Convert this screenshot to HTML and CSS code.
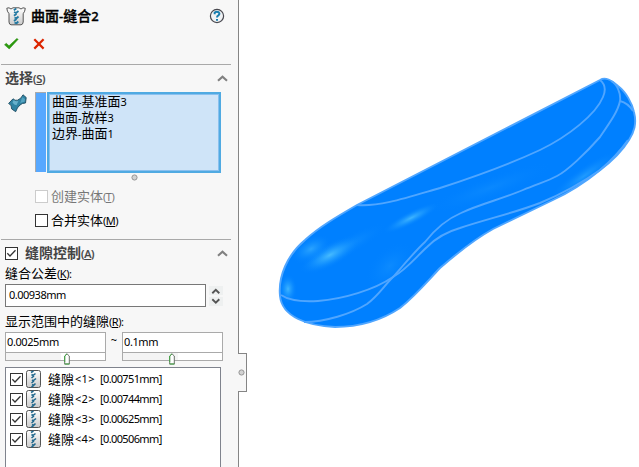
FILE: index.html
```html
<!DOCTYPE html>
<html lang="zh-CN">
<head>
<meta charset="utf-8">
<title>曲面-缝合2</title>
<link rel="stylesheet" href="styles.css">
</head>
<body>
<svg class="defs" width="0" height="0">
  <defs>
    <linearGradient id="metal" x1="0" y1="0" x2="0" y2="1"><stop offset="0" stop-color="#fff"/><stop offset="1" stop-color="#cbcbcb"/></linearGradient>
    <symbol id="up" viewBox="0 0 11 7"><path d="M1 5.7 5.5 1.6 10 5.7" fill="none" stroke="#808080" stroke-width="2.1"/></symbol>
    <symbol id="tick" viewBox="0 0 11 11"><path d="M1.3 5.3 4 8 9.5 2.3" fill="none" stroke="#333" stroke-width="1.3"/></symbol>
    <symbol id="knob" viewBox="0 0 7 7"><circle cx="3.5" cy="3.5" r="2.6" fill="#d2d2d2" stroke="#8d8d8d" stroke-width=".9"/></symbol>
    <symbol id="thumb" viewBox="0 0 6 12"><path d="M.7 11V3L3 .8 5.3 3V11Z" fill="#fff" stroke="#687268"/><path d="M.7 9V3L3 .8M.5 11h5" fill="none" stroke="#41a843"/></symbol>
    <symbol id="gap" viewBox="0 0 15 18">
      <rect x=".5" y=".5" width="14" height="17" rx="2" fill="url(#metal)" stroke="#555"/>
      <path d="M5 2.5 7.5 1M7 5.5 9.5 3.5M5.5 8 8 6M7.5 10.5 10 8.5M5.5 13 8 11M7.5 15.5 9.5 13.5M5.5 17 7.5 15.5M5.5 4.5 7 5.5M6 10 7.5 11M6 14.5 7.5 15.5" stroke="#23698e" stroke-width="1.6" fill="none"/>
    </symbol>
  </defs>
</svg>
<main class="app">
  <aside class="panel">
    <header class="title">
      <svg class="title-icon" viewBox="0 0 20 19"><path d="M.8 1.2 3 .8 5 2 7 .8h6L15 2 17 .8l2.3.5Q19 4.5 17.2 6.7V15Q16.9 17.7 15 17.8H5Q3.2 17.7 3 15V6.7Q1 4.5.8 1.2Z" fill="url(#metal)" stroke="#555"/><path d="m7.8 3.2 2.5-1.7M10 6l2.5-2M8 8.7l2.5-2M10.3 11.5l2.2-2M8 14l2.5-2M10.3 16.5l2-2M8 5l2.3 1M8.5 10.5l2 1M8.5 15.5l2 1" stroke="#2379a2" stroke-width="1.8"/></svg>
      <h1>曲面<i>-</i>缝合<i>2</i></h1>
      <svg class="help" viewBox="0 0 16 16"><circle cx="8" cy="8" r="6.6" fill="#f1f3f5" stroke="#48484f" stroke-width="1.2"/><path d="M5.7 6.2V4.5Q8 3 9.8 4.4 11.2 6 9.4 7.4 8 8.2 8 9.4M8 11v1.8" fill="none" stroke="#187eaf" stroke-width="2"/></svg>
    </header>
    <div class="actions">
      <svg class="ok" viewBox="0 0 15 12"><path d="M.5 6.8 2.3 5.3 5 7.8 12.8.5 14.2 1.3 5.2 11Z" fill="#2c9b0d" stroke="#278a10" stroke-width=".5"/></svg>
      <svg class="cancel" viewBox="0 0 12 12"><path d="m1.3 1.3 9.3 9.3M10.6 1.3 1.3 10.6" stroke="#dc2500" stroke-width="2.2"/></svg>
    </div>
    <section class="selection">
      <div class="head"><h2>选择<small>(<u>S</u>)</small></h2><svg class="chev"><use href="#up"/></svg></div>
      <div class="pick">
        <svg class="surf" viewBox="0 0 19 19"><path d="M.6 9.5 5 4.8Q7 7 9.5 6.2 13 5 15 .8L18.2 3.5 17.5 9Q14 9 12 11 9 13.5 7.7 17.7L3.7 15Q4 10.5.6 9.5Z" fill="#2f83a3" stroke="#1d4c62" stroke-width=".9"/><path d="M5.7 6Q8 8 10.5 6.7L8.5 11.2Q6 11 4.5 8.5Z" fill="#67b1cc"/><path d="M14.2 3.3 17 5 16.5 7.8Q14 8 12.2 9.2Z" fill="#55a4c1"/></svg>
        <div class="strip"></div>
        <ul class="faces"><li>曲面<i>-</i>基准面<i>3</i></li><li>曲面<i>-</i>放样<i>3</i></li><li>边界<i>-</i>曲面<i>1</i></li></ul>
      </div>
      <svg class="grip"><use href="#knob"/></svg>
      <label class="option off"><span class="box"></span><span class="name">创建实体<small>(<u>T</u>)</small></span></label>
      <label class="option"><span class="box"></span><span class="name">合并实体<small>(<u>M</u>)</small></span></label>
    </section>
    <section class="control">
      <div class="head"><span class="box"><svg><use href="#tick"/></svg></span><h2>缝隙控制<small>(<u>A</u>)</small></h2><svg class="chev"><use href="#up"/></svg></div>
      <div class="caption">缝合公差<small>(<u>K</u>):</small></div>
      <div class="tolerance"><div class="field">0.00938mm</div><svg class="spin" viewBox="0 0 14 20"><path d="M0 0h14v9H0zM0 11h14v9H0z" fill="#eef0f0"/><path d="M3.3 7.2 6.8 3.8l3.5 3.4M3.3 13.2l3.5 3.4 3.5-3.4" fill="none" stroke="#555" stroke-width="1.9"/></svg></div>
      <div class="caption second">显示范围中的缝隙<small>(<u>R</u>):</small></div>
      <div class="ranges">
        <div class="range"><div class="value">0.0025mm</div><div class="track"><svg class="low"><use href="#thumb"/></svg></div></div>
        <span class="tilde">~</span>
        <div class="range"><div class="value">0.1mm</div><div class="track"><svg class="high"><use href="#thumb"/></svg></div></div>
      </div>
      <ul class="gaps">
        <li><span class="box"><svg><use href="#tick"/></svg></span><svg class="gap"><use href="#gap"/></svg><b>缝隙</b><span class="num">&lt;1&gt;</span><span class="size">[0.00751mm]</span></li>
        <li><span class="box"><svg><use href="#tick"/></svg></span><svg class="gap"><use href="#gap"/></svg><b>缝隙</b><span class="num">&lt;2&gt;</span><span class="size">[0.00744mm]</span></li>
        <li><span class="box"><svg><use href="#tick"/></svg></span><svg class="gap"><use href="#gap"/></svg><b>缝隙</b><span class="num">&lt;3&gt;</span><span class="size">[0.00625mm]</span></li>
        <li><span class="box"><svg><use href="#tick"/></svg></span><svg class="gap"><use href="#gap"/></svg><b>缝隙</b><span class="num">&lt;4&gt;</span><span class="size">[0.00506mm]</span></li>
      </ul>
    </section>
    <div class="tab"><svg><use href="#knob"/></svg></div>
  </aside>
  <svg class="model" viewBox="239 0 400 467">
    <defs>
      <radialGradient id="shine"><stop offset="0" stop-color="#46bbff"/><stop offset=".45" stop-color="#239fff" stop-opacity=".65"/><stop offset="1" stop-color="#0080ff" stop-opacity="0"/></radialGradient>
      <clipPath id="body"><path id="outline" d="M280 296C278 277 287 255 305 240C319 227 338 216 357 205L600 80C605 77 612 80 618 86C626 92 632 103 634 112C637 124 634 132 629 140C623 150 611 162 599 171C583 184 568 193 553 200L493 229C475 239 462 249 440 268C425 284 415 296 400 308C382 320 360 327 335 327C308 326 282 317 280 296Z"/></clipPath>
    </defs>
    <use href="#outline" fill="#0080ff"/>
    <g clip-path="url(#body)">
      <ellipse cx="345" cy="247" rx="48" ry="10" transform="rotate(-28 345 247)" fill="url(#shine)" opacity=".25"/>
      <ellipse cx="330" cy="255" rx="34" ry="12" transform="rotate(-28 330 255)" fill="url(#shine)"/>
      <ellipse cx="311" cy="249" rx="22" ry="12" transform="rotate(-28 311 249)" fill="url(#shine)" opacity=".6"/>
      <ellipse cx="411" cy="218" rx="32" ry="7" transform="rotate(-27 411 218)" fill="url(#shine)" opacity=".9"/>
      <ellipse cx="288" cy="289" rx="9" ry="15" fill="url(#shine)" opacity=".9"/>
      <ellipse cx="490" cy="188" rx="68" ry="12" transform="rotate(-20 490 188)" fill="url(#shine)" opacity=".14"/>
      <ellipse cx="584" cy="176" rx="43" ry="9" transform="rotate(-35 584 176)" fill="url(#shine)" opacity=".45"/>
      <ellipse cx="390" cy="266" rx="30" ry="18" transform="rotate(-45 390 266)" fill="url(#shine)" opacity=".18"/>
    </g>
    <g fill="none" stroke="#50a6ff" stroke-width="1.9">
      <use href="#outline"/>
      <path d="M357 205C380 207 409 197 440 188C477 176 510 164 540 150C569 136 596 114 603 97C606 90 605 84 600 80"/>
      <path d="M281 295C290 301 303 302 318 301C343 299 374 290 393 277C407 269 415 258 427 247C437 237 446 232 460 228C487 219 514 213 540 203C564 193 586 180 600 170C614 158 623 147 628 140"/>
      <path d="M304 322C325 322 351 314 367 304C379 295 383 287 393 277C401 268 416 250 425 242C436 228 447 219 461 213C480 204 502 199 523 190C537 184 548 181 557 176C567 171 586 153 600 137C611 121 618 111 620 101C621 93 617 84 611 81"/>
      <path d="M620 101Q628 103 633 111"/>
    </g>
  </svg>
</main>
</body>
</html>
```

FILE: styles.css
```css
* { box-sizing: border-box; }
body { margin: 0; background: #fff; overflow: hidden; font: 13px/16px "Noto Sans", "Noto Sans CJK SC", sans-serif; color: #000; }
h1, h2, ul { margin: 0; padding: 0; list-style: none; }
svg { display: block; flex: none; }
.defs { position: absolute; }
.app { display: flex; width: 639px; height: 467px; }
.panel { position: relative; width: 239px; height: 467px; flex: none; background: #f7f7f7; border-right: 1px solid #858585; }
.model { width: 400px; height: 467px; }
i, small { font-size: 11px; font-style: normal; font-weight: inherit; }
small { letter-spacing: -.5px; }
u { text-underline-offset: 1px; text-decoration-thickness: 1px; }

.title { display: flex; align-items: center; height: 32px; padding: 0 14px 0 6px; }
.title-icon { width: 20px; height: 19px; }
h1 { margin-left: 5px; font-size: 14px; line-height: 20px; font-weight: 500; -webkit-text-stroke: .35px currentColor; }
h1 i { font-size: 13px; }
.help { width: 16px; height: 16px; margin-left: auto; margin-right: -1px; }
.actions { display: flex; align-items: center; gap: 14px; height: 24px; padding-left: 4px; }
.ok { width: 15px; height: 12px; }
.cancel { width: 12px; height: 12px; }

.selection { margin: 8px 0 0 1px; width: 230px; height: 175px; border-top: 1px solid #a9a9a9; }
.control { margin-left: 1px; width: 230px; border-top: 1px solid #a9a9a9; }
.head { display: flex; align-items: center; height: 27px; padding: 0 3px 0 4px; }
h2 { font-size: 14px; line-height: 16px; font-weight: 700; color: #444; }
h2 small { font-weight: 500; -webkit-text-stroke: .2px currentColor; letter-spacing: -.3px; }
.chev { width: 11px; height: 7px; margin-left: auto; }
.pick { display: flex; height: 81px; }
.surf { width: 19px; height: 19px; margin: 2px 8px 0 7px; }
.strip { width: 11px; height: 80px; background: #57a8ff; border-top: 1px solid #aaa; border-left: 1px solid #aaa; }
.faces { width: 174px; height: 81px; margin-left: 1px; padding: 0 0 0 2px; background: #cfe4f8; border: 2px solid #50aae2; box-shadow: inset 0 0 0 1px #89c0ef; }
.faces li { height: 16px; padding-left: 1px; line-height: 14px; }
.grip { width: 7px; height: 7px; margin: 1px 0 0 130px; }
.option { display: flex; align-items: center; height: 24px; margin-left: 34px; }
.grip + .option { margin-top: 3px; }
.box { width: 13px; height: 13px; flex: none; background: #fff; border: 1px solid #333; }
.box svg { width: 11px; height: 11px; }
.option .box { margin-right: 3px; }
.off { color: #777; }
.off .box { border-color: #ccc; }

.control .head { padding-left: 4px; }
.control h2 { margin-left: 7px; }
.caption { height: 17px; margin: -2px 0 0 4px; line-height: 16px; }
.tolerance { display: flex; align-items: center; gap: 3px; height: 23px; margin: 2px 0 0 4px; }
.field { width: 201px; height: 23px; padding-left: 3px; border: 1px solid #777; background: #fff; font-size: 11px; line-height: 19px; letter-spacing: -.5px; }
.spin { width: 14px; height: 20px; }
.caption.second { margin-top: 6px; height: 19px; }
.ranges { display: flex; height: 29px; margin-left: 4px; }
.range { width: 101px; height: 29px; background: #fff; border: 1px solid #aaa; }
.value { height: 20px; padding-left: 1px; border-bottom: 1px solid #aaa; font-size: 11px; line-height: 18px; letter-spacing: -.4px; }
.track { height: 7px; background: linear-gradient(90deg, #f4f4f4 55px, #fff 55px); }
.low { width: 6px; height: 12px; margin-left: 58px; }
.high { width: 6px; height: 12px; margin-left: 46px; }
.tilde { width: 16px; text-align: center; font-size: 11px; line-height: 16px; }
.gaps { width: 216px; height: 100px; margin: 6px 0 0 4px; padding: 1px 0 0 4px; background: #fff; border: 1px solid #7f838d; border-bottom: 0; }
.gaps li { display: flex; align-items: center; height: 20px; }
.gap { width: 15px; height: 18px; margin: 0 7px 0 3px; }
.gaps b { font-weight: 400; }
.num, .size { font-size: 11px; }
.num { width: 26px; padding-left: 1px; letter-spacing: .3px; }
.size { letter-spacing: -.62px; }
.tab { position: absolute; left: 238px; top: 353px; width: 9px; height: 39px; display: flex; align-items: center; background: #f7f7f7; border: 1px solid #858585; border-left: 0; }
.tab svg { width: 7px; height: 7px; }
```
